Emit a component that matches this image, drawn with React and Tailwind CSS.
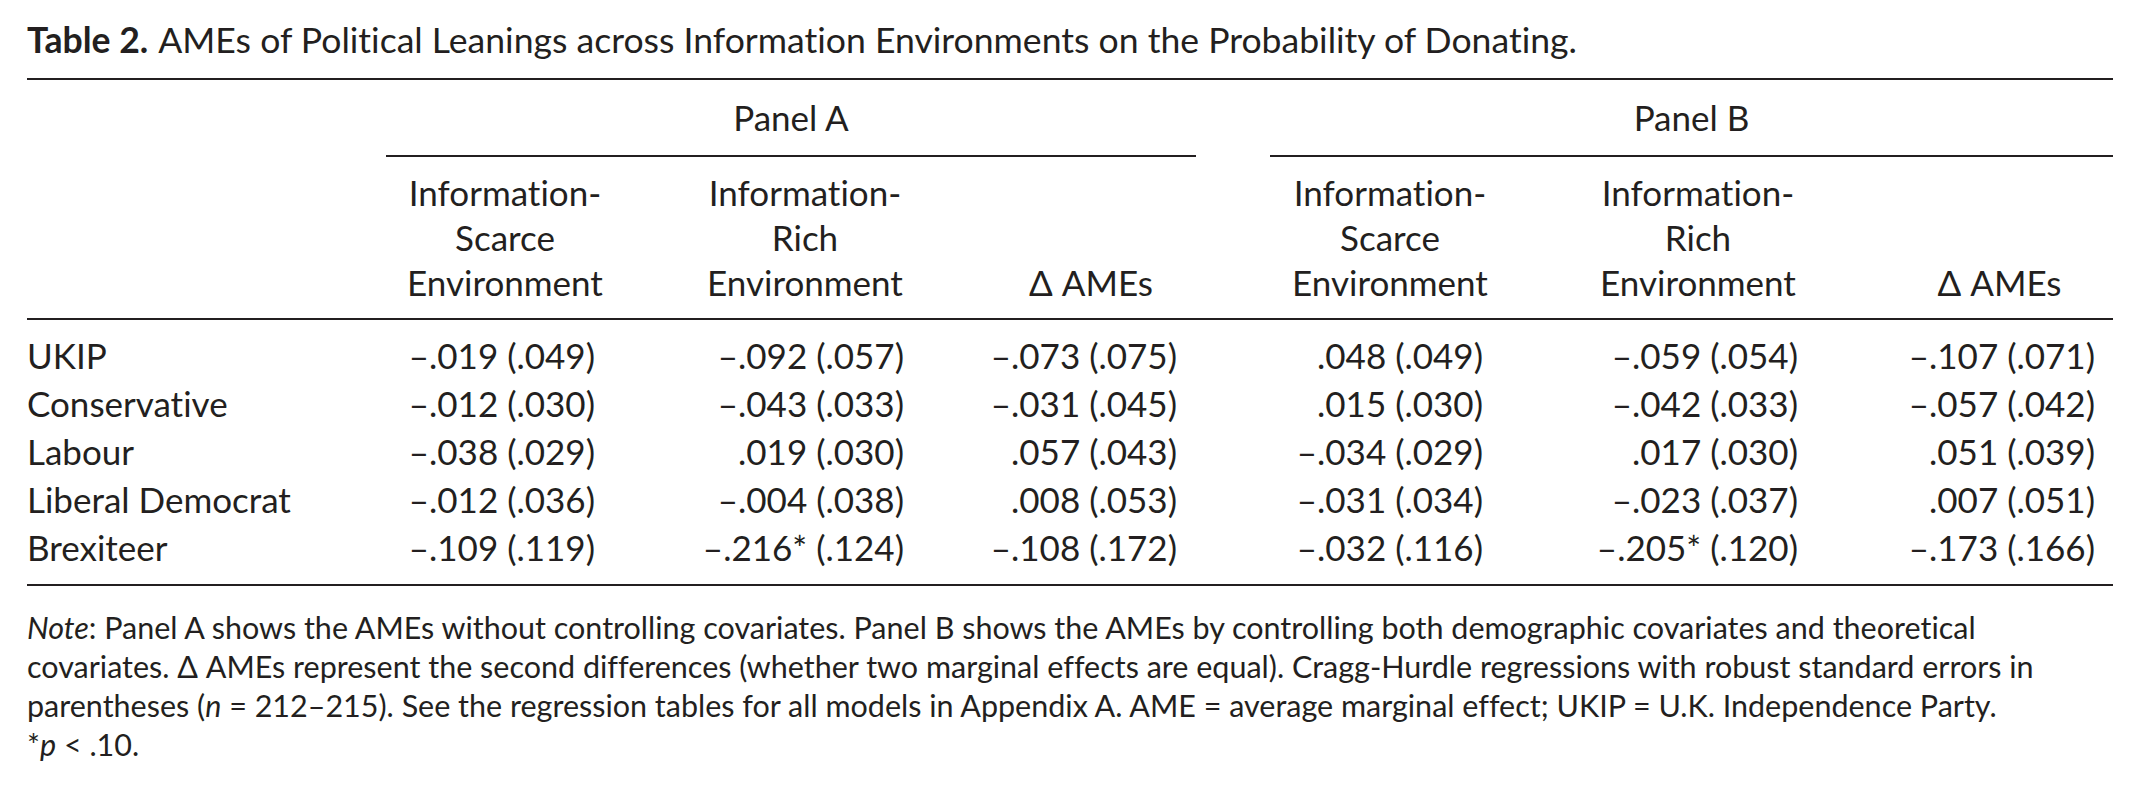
import React from "react";

const cols = "grid grid-cols-[359px_238px_362px_210px_74px_240px_376px_227px]";

const rows = [
    ["UKIP", "–.019 (.049)", "–.092 (.057)", "–.073 (.075)", ".048 (.049)", "–.059 (.054)", "–.107 (.071)"],
    ["Conservative", "–.012 (.030)", "–.043 (.033)", "–.031 (.045)", ".015 (.030)", "–.042 (.033)", "–.057 (.042)"],
    ["Labour", "–.038 (.029)", ".019 (.030)", ".057 (.043)", "–.034 (.029)", ".017 (.030)", ".051 (.039)"],
    ["Liberal Democrat", "–.012 (.036)", "–.004 (.038)", ".008 (.053)", "–.031 (.034)", "–.023 (.037)", ".007 (.051)"],
    ["Brexiteer", "–.109 (.119)", "–.216* (.124)", "–.108 (.172)", "–.032 (.116)", "–.205* (.120)", "–.173 (.166)"],
];

// right padding of each number column, so the figures line up like the print
const pads = ["pr-[29px]", "pr-[82px]", "pr-[19px]", "pr-[27px]", "pr-[88px]", "pr-[18px]"];

const Header = ({ second }) => (
    <div className="text-center whitespace-nowrap">
        Information-
        <br />
        {second}
        <br />
        Environment
    </div>
);

export default function App() {
    return (
        <div className="min-h-screen bg-white pl-[27px] pt-[20px] font-['Lato',sans-serif] text-[35px] text-[#231f20] [font-variant-ligatures:none]">
            <h1 className="text-[35.6px] leading-[40px] whitespace-nowrap">
                <span className="font-bold">Table 2.</span>
                <span className="pl-[10px]">
                    AMEs of Political Leanings across Information Environments on the Probability of Donating.
                </span>
            </h1>

            <div className="mt-[18px] w-[2086px] border-t-2 border-[#231f20]">
                {/* panel titles */}
                <div className={cols}>
                    <div className="col-start-2 col-span-3 border-b-2 border-[#231f20] pt-[17px] pb-[18px] text-center leading-[40px]">
                        Panel A
                    </div>
                    <div className="col-start-6 col-span-3 border-b-2 border-[#231f20] pt-[17px] pb-[18px] text-center leading-[40px]">
                        Panel B
                    </div>
                </div>

                {/* column heads */}
                <div className={`${cols} border-b-2 border-[#231f20] pt-[13px] pb-[13px] leading-[45px]`}>
                    <div />
                    <Header second="Scarce" />
                    <Header second="Rich" />
                    <div className="self-end text-center whitespace-nowrap">Δ AMEs</div>
                    <div />
                    <Header second="Scarce" />
                    <Header second="Rich" />
                    <div className="self-end text-center whitespace-nowrap">Δ AMEs</div>
                </div>

                {/* body */}
                <div className="border-b-2 border-[#231f20] pt-[11px] pb-[13px] leading-[48px]">
                    {rows.map((r) => (
                        <div key={r[0]} className={cols}>
                            <div className="whitespace-nowrap">{r[0]}</div>
                            {r.slice(1, 4).map((v, i) => (
                                <div key={i} className={`text-right whitespace-nowrap ${pads[i]}`}>
                                    {v}
                                </div>
                            ))}
                            <div />
                            {r.slice(4).map((v, i) => (
                                <div key={i} className={`text-right whitespace-nowrap ${pads[i + 3]}`}>
                                    {v}
                                </div>
                            ))}
                        </div>
                    ))}
                </div>
            </div>

            <div className="mt-[22px] text-[30.5px] leading-[39px] whitespace-nowrap">
                <div>
                    <i>Note</i>: Panel A shows the AMEs without controlling covariates. Panel B shows the AMEs by
                    controlling both demographic covariates and theoretical
                </div>
                <div>
                    covariates. Δ AMEs represent the second differences (whether two marginal effects are equal).
                    Cragg-Hurdle regressions with robust standard errors in
                </div>
                <div>
                    parentheses (<i>n</i> = 212–215). See the regression tables for all models in Appendix A. AME =
                    average marginal effect; UKIP = U.K. Independence Party.
                </div>
                <div>
                    *<i>p</i> &lt; .10.
                </div>
            </div>
        </div>
    );
}
